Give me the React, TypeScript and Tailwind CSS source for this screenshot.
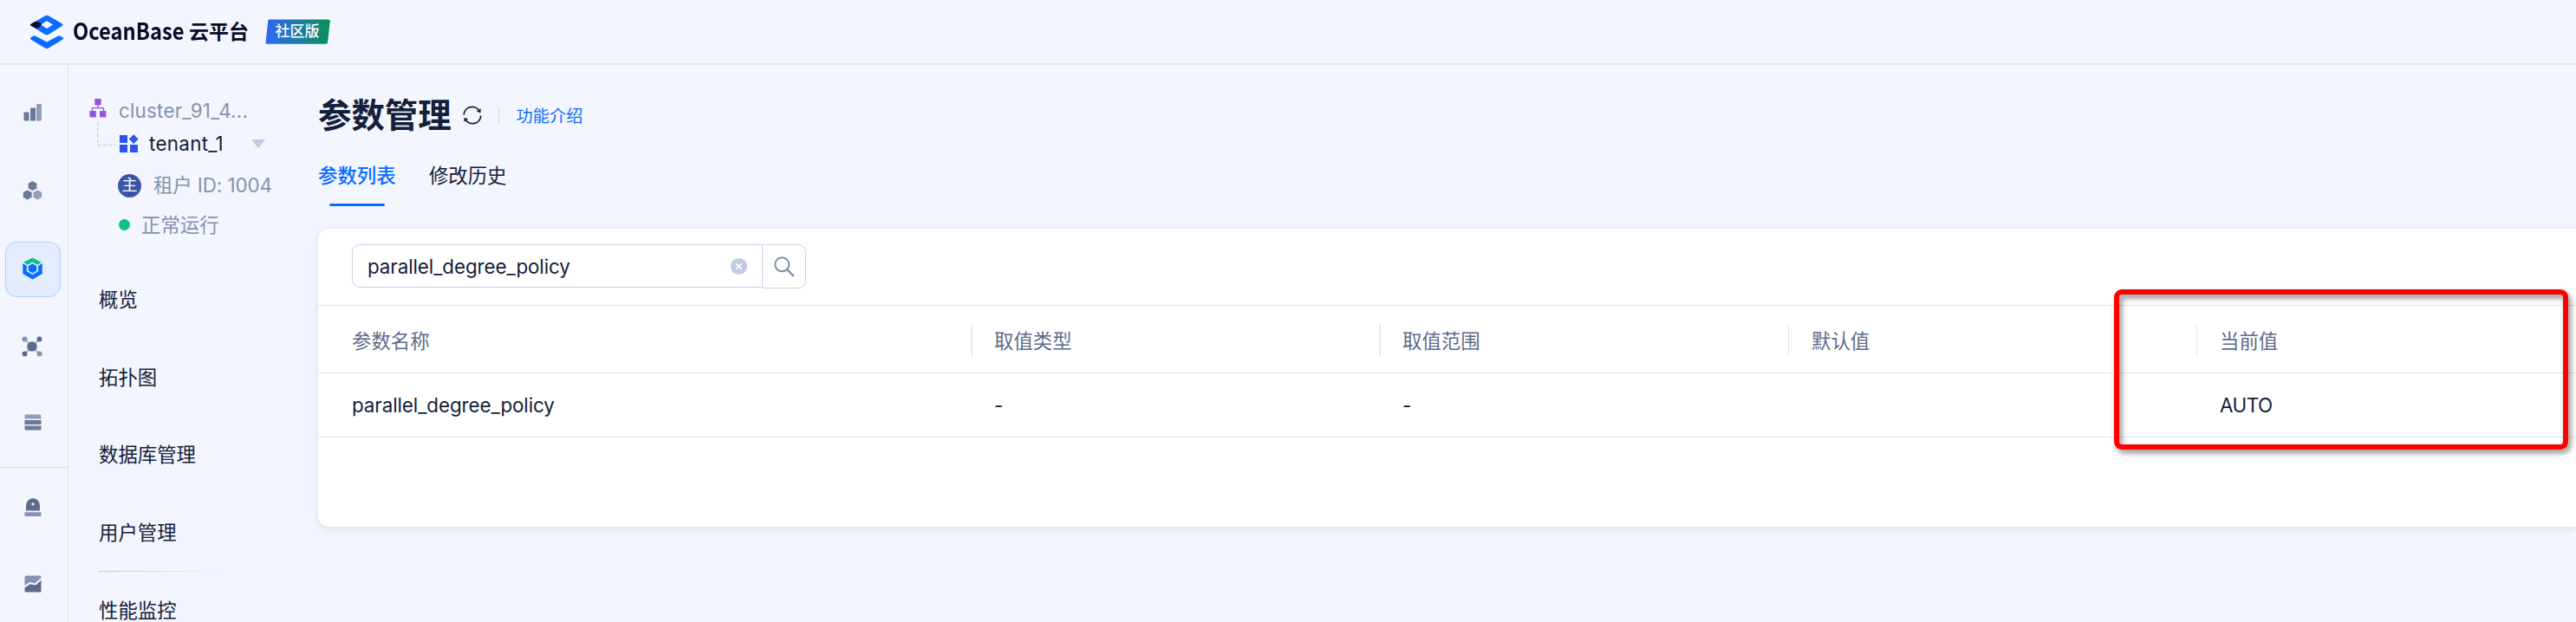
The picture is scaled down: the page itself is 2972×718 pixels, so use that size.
import React from "react";

const railItem = "flex h-16 w-16 items-center justify-center";

function Logo() {
  return (
    <svg width="40" height="40" viewBox="0 0 40 40" className="shrink-0">
      <path fillRule="evenodd" fill="#0a6cff" d="M18 1.2 Q20 .2 22 1.2 L38 10.4 Q39.600 11.600 38 12.700 L22 22.800 Q20 23.900 18 22.800 L2 12.700 Q.6 11.600 2 10.400 Z M20 7 L13.200 11.600 L20 16 L27 11.600 Z" />
      <path fill="#080c28" d="M8.500 8 Q12 8.600 14.300 10.700 L13 12.200 L10 15.400 L7 15.400 L1.300 12.300 Q.3 11.600 1.300 10.900 L5.800 8.200 Z" />
      <path fill="#0a6cff" d="M4.500 24.600 Q6 23.900 7.400 24.700 L20 31.500 L32.600 24.700 Q34 23.900 35.500 24.600 L38.500 26.300 Q39.900 27.300 38.500 28.400 L22 38.400 Q20 39.600 18 38.400 L1.500 28.400 Q.2 27.300 1.500 26.300 Z" />
    </svg>
  );
}

function BarsIcon() {
  return (
    <svg width="22" height="20" viewBox="0 0 22 20">
      <rect x="0.500" y="9.500" width="6" height="10" rx="1" fill="#6b7896" />
      <rect x="8" y="4.500" width="6" height="15" rx="1" fill="#6b7896" />
      <rect x="15" y="0" width="6" height="19.500" rx="1" fill="#929eba" />
    </svg>
  );
}

function HexesIcon() {
  const hex = "M0 -5.500 L4.900 -2.800 V2.800 L0 5.500 L-4.900 2.800 V-2.800 Z";
  return (
    <svg width="24" height="22" viewBox="0 0 24 22">
      <path d={hex} transform="translate(11.500 5.600)" fill="#6b7896" />
      <path d={hex} transform="translate(5.700 15.900)" fill="#6b7896" />
      <path d={hex} transform="translate(17.300 15.900)" fill="#929eba" />
    </svg>
  );
}

function TenantIcon() {
  return (
    <svg width="24" height="26" viewBox="0 0 24 26">
      <path d="M11.500 .5 L21.800 5.800 L17.300 8.700 L11.500 5.600 L5.700 8.700 L1.200 5.800 Z" fill="#10c083" />
      <path d="M.3 7 L4.800 9.700 V16.300 L11.500 20 L18.200 16.300 V9.700 L22.800 7 V19 L11.500 25.500 L.3 19 Z" fill="#0a6cff" />
      <path d="M11.500 7.200 L16.300 9.900 V15.400 L11.500 18.200 L6.700 15.400 V9.900 Z" fill="#0a6cff" />
    </svg>
  );
}

function NodesIcon() {
  return (
    <svg width="24" height="24" viewBox="0 0 24 24">
      <path d="M3.500 3.500 L20.500 20.500 M20.500 3.500 L3.500 20.500" stroke="#8794b0" strokeWidth="1.200" />
      <circle cx="12" cy="12" r="5.800" fill="#5d6b8a" />
      <circle cx="3.500" cy="3.500" r="3" fill="#8794b0" />
      <circle cx="20.500" cy="3.500" r="3" fill="#5d6b8a" />
      <circle cx="3.500" cy="20.500" r="3" fill="#5d6b8a" />
      <circle cx="20.500" cy="20.500" r="3" fill="#8794b0" />
    </svg>
  );
}

function StackIcon() {
  return (
    <svg width="20" height="19" viewBox="0 0 20 19">
      <path d="M1.500 .5 H18 Q19.500 .5 19.500 2 V5.500 H.5 V2 Q.5 .5 1.500 .5 Z" fill="#929eba" />
      <rect x="0.500" y="7" width="19" height="5" fill="#6b7896" />
      <path d="M.5 13.500 H19.500 V17 Q19.500 18.500 18 18.500 H2 Q.5 18.500 .5 17 Z" fill="#6b7896" />
    </svg>
  );
}

function AlarmIcon() {
  return (
    <svg width="20" height="22" viewBox="0 0 20 22">
      <path fillRule="evenodd" d="M2 14.500 V8.300 A8 8 0 0 1 18 8.300 V14.500 Z M10 5.300 A1.600 1.600 0 1 0 10 8.500 A1.600 1.600 0 1 0 10 5.300 Z" fill="#5d6b8a" />
      <path d="M.5 16.300 H19.500 V20 Q19.500 21 18.500 21 H1.500 Q.5 21 .5 20 Z" fill="#8794b0" />
    </svg>
  );
}

function TrendIcon() {
  return (
    <svg width="20" height="20" viewBox="0 0 20 20">
      <path d="M2 .5 H18 Q19.500 .5 19.500 2 V3 L12.500 9.300 L6 8 L.5 12 V2 Q.5 .5 2 .5 Z" fill="#8794b0" />
      <path d="M19.500 5.800 V18.500 Q19.500 19.500 18.500 19.500 H1.500 Q.5 19.500 .5 18.500 V14.500 L6.700 10.200 L13.300 11.500 Z" fill="#5d6b8a" />
    </svg>
  );
}

function Header() {
  return (
    <header className="flex h-[75px] shrink-0 items-center border-b-2 border-[#e2e6f3] pl-[34px]">
      <Logo />
      <div className="ml-[10px] flex h-10 w-[203px] items-center justify-between whitespace-nowrap pb-[3px] font-['Noto_Sans_CJK_SC',sans-serif] font-bold text-[#080c28]">
        <span className="block w-[129px] origin-left scale-x-[0.88] text-[27px] leading-10">OceanBase</span>
        <span className="text-[23px] leading-10">云平台</span>
      </div>
      <div className="relative ml-[19px] flex h-[29px] w-[75px] items-center justify-center">
        <svg className="absolute inset-0" width="75" height="29" viewBox="0 0 75 29">
          <defs>
            <linearGradient id="badge" x1="0" y1="0" x2="1" y2="0">
              <stop offset="0" stopColor="#2f67f8" />
              <stop offset="1" stopColor="#0a9058" />
            </linearGradient>
          </defs>
          <path d="M4.500 .5 H73 Q75 .5 74.800 2.500 L72 27 Q71.700 28.800 70 28.800 H1.500 Q.3 28.800 .5 27.500 L3.300 1.500 Q3.500 .5 4.500 .5 Z" fill="url(#badge)" />
        </svg>
        <span className="relative pr-[1px] text-[17px] font-medium leading-none text-white">社区版</span>
      </div>
    </header>
  );
}

function Rail() {
  return (
    <nav className="flex w-[79px] shrink-0 flex-col border-r border-[#dde3f2]">
      <div className="flex h-[465px] shrink-0 flex-col gap-[26px] border-b border-[#d5dcec] pl-[6px] pt-[24px]">
        <div className={railItem + " shrink-0 pb-[2px]"}><BarsIcon /></div>
        <div className={railItem + " shrink-0 pb-[3px]"}><HexesIcon /></div>
        <div className={railItem + " shrink-0 rounded-[13px] border border-[#b0cdff] bg-[#e3edff] pb-[3px]"}><TenantIcon /></div>
        <div className={railItem + " shrink-0 pb-[2px] pr-[3px]"}><NodesIcon /></div>
        <div className={railItem + " shrink-0 pb-[7px]"}><StackIcon /></div>
      </div>
      <div className="flex flex-col gap-[25px] pl-[6px] pt-[14px]">
        <div className={railItem + " shrink-0"}><AlarmIcon /></div>
        <div className={railItem + " shrink-0 pb-[2px]"}><TrendIcon /></div>
      </div>
    </nav>
  );
}

function ClusterIcon() {
  return (
    <svg width="20" height="22" viewBox="0 0 20 22" className="-mt-[6px]">
      <path d="M10 6 V10.500 M3.500 15 V10.700 H16.500 V15" fill="none" stroke="#9254de" strokeWidth="1.300" />
      <rect x="6.300" y="0" width="7.300" height="7.300" fill="#9254de" />
      <rect x="0.500" y="14" width="7.300" height="7.300" fill="#9254de" />
      <rect x="12" y="14" width="7.300" height="7.300" fill="#9254de" />
    </svg>
  );
}

function AppIcon() {
  return (
    <svg width="22" height="22" viewBox="0 0 22 22">
      <rect x="0" y="1" width="9" height="9" fill="#2f54eb" />
      <rect x="0" y="12" width="9" height="9" fill="#2f54eb" />
      <rect x="12" y="12" width="9" height="9" fill="#2f54eb" />
      <path d="M16.200 .2 L21.600 5.600 L16.200 11 L10.800 5.600 Z" fill="#2f54eb" />
    </svg>
  );
}

const menu = ["概览", "拓扑图", "数据库管理", "用户管理"];

function Sidebar() {
  return (
    <aside className="flex w-[288px] shrink-0 flex-col">
      <div className="mt-[32px] flex h-[41px] shrink-0 items-center pl-[24px]">
        <ClusterIcon />
        <span className="ml-[14px] text-[22.400px] tracking-[0.2px] text-[#8592ad]">cluster_91_4...</span>
      </div>
      <div className="flex h-[36px] shrink-0 items-center pl-[33px]">
        <svg width="23" height="28" viewBox="0 0 23 28" className="-mt-[23px]">
          <path d="M.7 0 V26.500 H22" fill="none" stroke="#cdd5e6" strokeWidth="1.500" strokeDasharray="4.500 2" />
        </svg>
        <div className="ml-[3px]"><AppIcon /></div>
        <span className="ml-[12px] w-[118px] text-[22.400px] tracking-[0.3px] text-[#132039]">tenant_1</span>
        <svg width="16" height="10" viewBox="0 0 16 10"><path d="M0 0 H16 L8 10 Z" fill="#c0cae0" /></svg>
      </div>
      <div className="mt-[2px] flex h-[56px] shrink-0 items-center pl-[57px]">
        <span className="flex h-[27px] w-[27px] items-center justify-center rounded-full bg-[#3b55a5] pb-px text-[18px] leading-none text-white">主</span>
        <span className="ml-[14px] text-[22.400px] tracking-[-0.08px] text-[#8592ad]">租户 ID: 1004</span>
      </div>
      <div className="flex h-[35px] shrink-0 items-center pl-[58px]">
        <span className="h-[13px] w-[13px] rounded-full bg-[#10c083]" />
        <span className="ml-[13px] text-[22.400px] text-[#8592ad]">正常运行</span>
      </div>
      <div className="mt-[24px] flex shrink-0 flex-col pl-[35px] text-[22.400px] text-[#132039]">
        {menu.map((m) => (
          <div key={m} className="flex h-[89.600px] shrink-0 items-center">{m}</div>
        ))}
        <div className="h-px w-[144px] shrink-0 bg-gradient-to-r from-[#bcc7dc] to-[#f3f6fe]" />
        <div className="flex h-[89.600px] shrink-0 items-center">性能监控</div>
      </div>
    </aside>
  );
}

function RefreshIcon() {
  return (
    <svg width="22" height="22" viewBox="0 0 22 22" fill="none" stroke="#132039" strokeWidth="1.800">
      <path d="M1.200 10.500 A9.600 9.600 0 0 1 19 6" />
      <path d="M20.800 11.500 A9.600 9.600 0 0 1 3 16" />
      <path d="M20.800 3.300 L20.500 8.300 L15.800 6.800 Z" fill="#132039" stroke="none" />
      <path d="M1.200 18.700 L1.500 13.700 L6.200 15.200 Z" fill="#132039" stroke="none" />
    </svg>
  );
}

const columns = ["参数名称", "取值类型", "取值范围", "默认值", "当前值"];
const row = ["parallel_degree_policy", "-", "-", "", "AUTO"];
const grid = "grid grid-cols-[753px_471px_472px_471px_1fr]";

function headCell(i: number) {
  if (i === 0) return "pl-[39px] pt-[4px]";
  const cell = "mt-[3px] flex h-9 items-center pt-[2px]";
  return i < 3
    ? cell + " border-l-2 border-[#e3e9f6] pl-[25px]"
    : cell + " border-l border-[#dfe5f4] pl-[26px]";
}

function Main() {
  return (
    <main className="min-w-0 flex-1">
      <div className="mt-[32px] flex h-[52px] items-center">
        <h1 className="text-[38.400px] font-bold leading-[52px] text-[#132039]">参数管理</h1>
        <div className="-mt-px ml-[13px]"><RefreshIcon /></div>
        <div className="ml-[19px] mr-[20px] mt-px h-[21px] w-px bg-[#cfd7e8]" />
        <a className="pt-[3px] text-[19.200px] text-[#0a6cff]">功能介绍</a>
      </div>
      <div className="flex h-[80px] gap-[38.400px] pt-[26px] text-[22.400px] leading-[36px]">
        <div className="flex flex-col items-center font-medium text-[#0a6cff]">
          参数列表
          <span className="mt-[14px] h-[3px] w-16 rounded-sm bg-[#0a6cff]" />
        </div>
        <div className="text-[#132039]">修改历史</div>
      </div>
      <section className="relative mt-[25px] h-[344px] rounded-l-[12.800px] bg-white shadow-[0_2px_8px_rgba(19,32,57,0.1)]">
        <div className="flex h-[89px] items-start border-b border-[#dde5f5] pl-[39px] pt-[18px]">
          <div className="flex h-[50px] w-[473px] items-center justify-between rounded-l-[9px] border border-r-0 border-[#c9d2e6] pl-[17px] pr-[17px]">
            <span className="pt-[2px] text-[22.400px] tracking-[-0.08px] text-[#132039]">parallel_degree_policy</span>
            <svg width="19" height="19" viewBox="0 0 19 19">
              <circle cx="9.500" cy="9.500" r="9.500" fill="#c0cae2" />
              <path d="M6.300 6.300 L12.700 12.700 M12.700 6.300 L6.300 12.700" stroke="#fff" strokeWidth="1.800" />
            </svg>
          </div>
          <div className="flex h-[51px] w-[51px] items-center justify-center rounded-r-[9px] border border-[#c9d2e6]">
            <svg width="24" height="24" viewBox="0 0 24 24" fill="none" stroke="#7f8dac" strokeWidth="2">
              <circle cx="9.300" cy="9.300" r="8" />
              <path d="M15 15 L22.800 22.800" strokeWidth="2.400" />
            </svg>
          </div>
        </div>
        <div className={grid + " h-[78px] items-center border-b border-[#dde5f5] text-[22.400px] text-[#5c6b8a]"}>
          {columns.map((c, i) => (
            <div key={c} className={headCell(i)}>{c}</div>
          ))}
        </div>
        <div className={grid + " h-[74px] items-center border-b border-[#dde5f5] text-[22.400px] tracking-[-0.08px] text-[#132039]"}>
          {row.map((c, i) => (
            <div key={i} className={i === 0 ? "pl-[39px]" : i === 4 ? "pl-[27px] tracking-[-0.5px]" : "pl-[27px]"}>{c}</div>
          ))}
        </div>
        <div className="absolute left-[2072px] top-[70px] h-[185px] w-[524px] rounded-[9px] border-[6px] border-[#ff0000] drop-shadow-[3px_4px_3px_rgba(0,0,0,0.45)]" />
      </section>
    </main>
  );
}

export default function App() {
  return (
    <div className="flex h-[718px] w-[2972px] flex-col overflow-hidden bg-[#f3f6fe] font-['Inter','Noto_Sans_CJK_SC',sans-serif]">
      <Header />
      <div className="flex min-h-0 flex-1">
        <Rail />
        <Sidebar />
        <Main />
      </div>
    </div>
  );
}
